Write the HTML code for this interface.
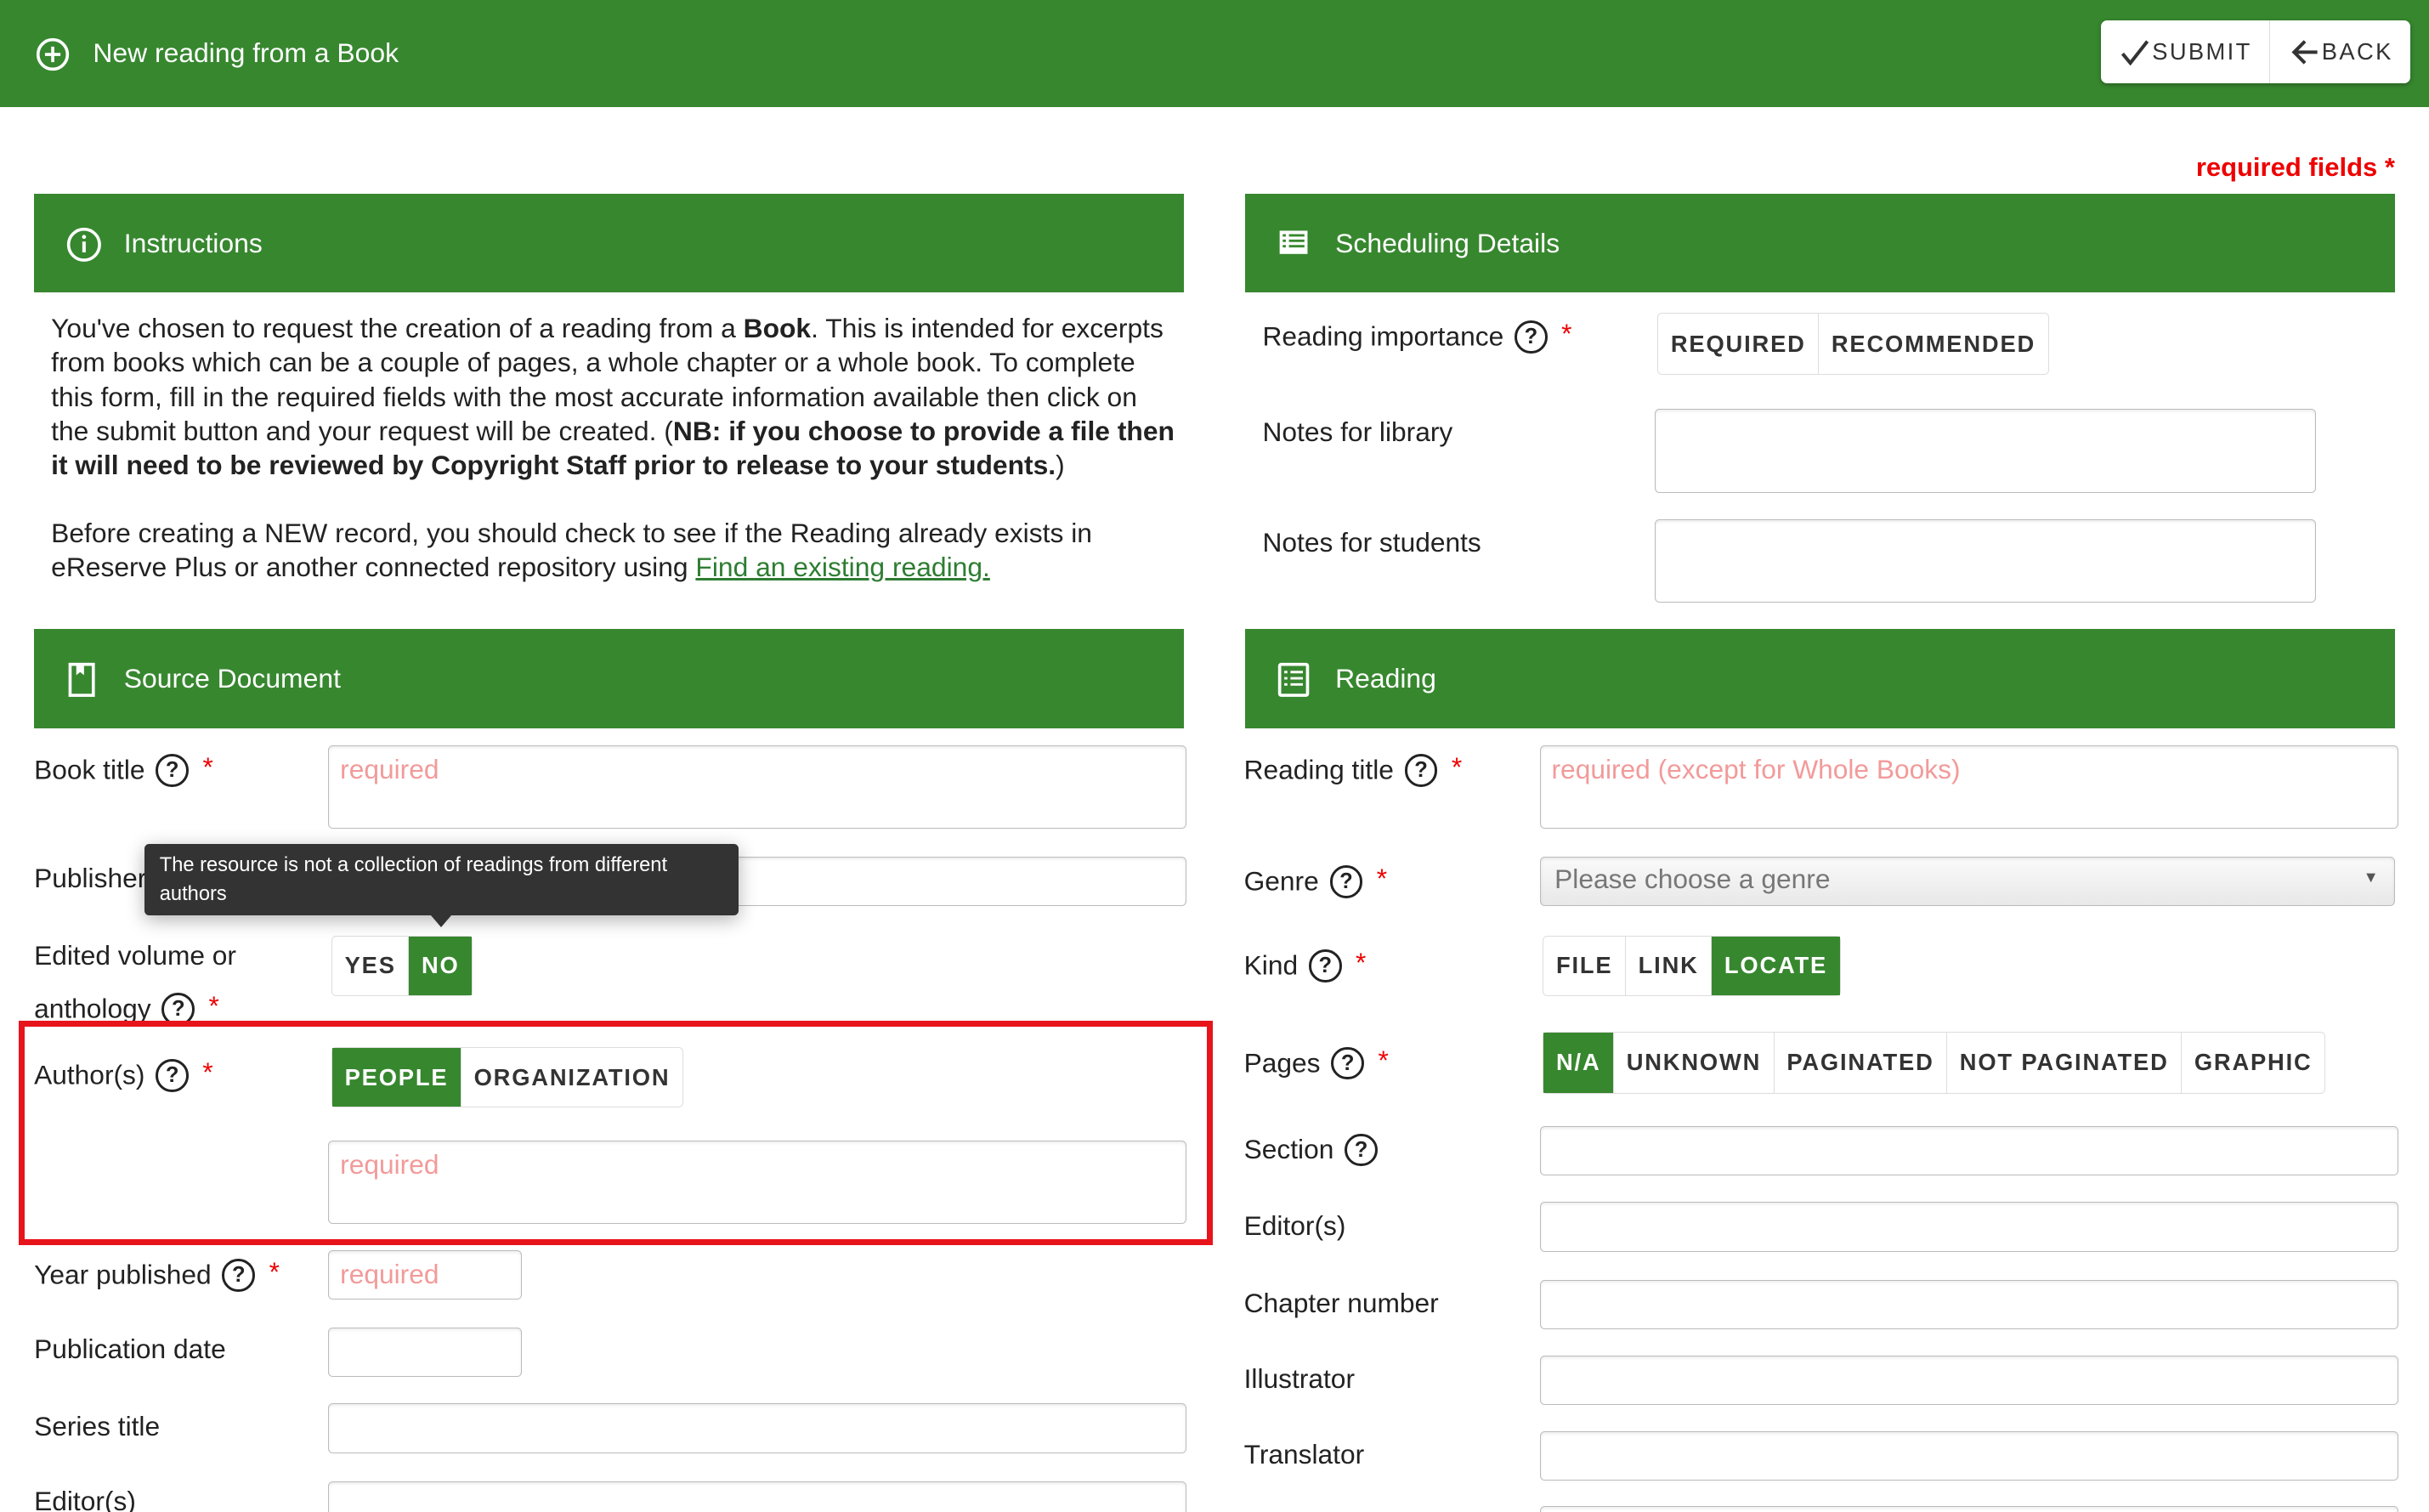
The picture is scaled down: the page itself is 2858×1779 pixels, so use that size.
<!DOCTYPE html>
<html><head><meta charset="utf-8"><style>
html,body{margin:0;padding:0;background:#fff;overflow:hidden}
body{width:2858px;height:1779px}
#w{zoom:1.8227;width:1568px;height:976px;position:relative;font-family:"Liberation Sans",Arial,sans-serif;color:#222;font-size:17px}
.a{position:absolute}
.g{background:#37872f;color:#fff}
.hd{position:absolute;height:64px;width:742px;background:#37872f;color:#fff;font-size:17.5px}
.hd span{position:absolute;left:58px;top:22px}
.hd svg{position:absolute;left:20px;top:21px}
.lb{position:absolute;font-size:17.4px;color:#222;white-space:nowrap;line-height:20px;margin-top:-2px}
.q{display:inline-block;width:18px;height:18px;border:2px solid #222;border-radius:50%;font-size:14px;font-weight:bold;text-align:center;line-height:18px;vertical-align:middle;position:relative;top:-1px;margin-left:7px}
.st{color:#e00;margin-left:9px;vertical-align:2px}
.in{position:absolute;border:1px solid #bbb;border-radius:3px;background:#fff;box-shadow:inset 0 1px 2px rgba(0,0,0,.08);box-sizing:border-box;color:#f29a9a;font-size:17.4px;padding:5px 7px}
.tg{position:absolute;display:flex;border:1px solid #ddd;border-radius:3px;box-sizing:border-box;background:#fff}
.tg div{padding:0 8px;font-size:15px;letter-spacing:1px;font-weight:bold;color:#333;border-right:1px solid #ddd;display:flex;align-items:center}
.tg div:last-child{border-right:none}
.tg .on{background:#37872f;color:#fff}
p{margin:0}
</style></head><body><div id="w">
<div class="a g" style="left:0;top:0;width:1568px;height:69px"></div>
<svg class="a" style="left:23px;top:24px" width="22" height="22" viewBox="0 0 22 22"><circle cx="11" cy="11" r="9.5" fill="none" stroke="#fff" stroke-width="2"/><path d="M11 6v10M6 11h10" stroke="#fff" stroke-width="2"/></svg>
<div class="a" style="left:60px;top:24px;color:#fff;font-size:17.5px">New reading from a Book</div>
<div class="a" style="left:1356px;top:13px;width:200px;height:41px;background:#fff;border-radius:4px;box-shadow:0 1px 3px rgba(0,0,0,.3);display:flex;font-size:15px;letter-spacing:1.3px;color:#333">
<div style="width:109px;border-right:1px solid #ddd;display:flex;align-items:center;justify-content:center"><svg width="22" height="18" viewBox="0 0 20 18"><path d="M2 10l5 6L18 2" fill="none" stroke="#333" stroke-width="2.2"/></svg>SUBMIT</div>
<div style="flex:1;display:flex;align-items:center;justify-content:center"><svg width="22" height="18" viewBox="0 0 20 18"><path d="M18 9H4M10 2L3 9l7 7" fill="none" stroke="#333" stroke-width="2.2"/></svg>BACK</div></div>
<div class="a" style="right:22px;top:98px;color:#e00;font-weight:bold;font-size:17px">required fields *</div>

<div class="hd" style="left:22px;top:125px"><svg width="24" height="24" viewBox="0 0 24 24"><circle cx="12" cy="12" r="10" fill="none" stroke="#fff" stroke-width="2"/><path d="M12 10v7" stroke="#fff" stroke-width="2.2"/><circle cx="12" cy="7" r="1.3" fill="#fff"/></svg><span>Instructions</span></div>
<div class="hd" style="left:804px;top:125px"><svg width="22" height="22" viewBox="0 0 22 22"><rect x="2" y="3" width="18" height="15" fill="#fff"/><path d="M4 6h2M8 6h10M4 9.5h2M8 9.5h10M4 13h2M8 13h10" stroke="#37872f" stroke-width="1.6"/></svg><span>Scheduling Details</span></div>
<div class="a" style="left:33px;top:201px;width:726px;line-height:22px;font-size:17.45px">
<p>You've chosen to request the creation of a reading from a <b>Book</b>. This is intended for excerpts from books which can be a couple of pages, a whole chapter or a whole book. To complete this form, fill in the required fields with the most accurate information available then click on the submit button and your request will be created. (<b>NB: if you choose to provide a file then it will need to be reviewed by Copyright Staff prior to release to your students.</b>)</p>
<p style="margin-top:22px">Before creating a NEW record, you should check to see if the Reading already exists in eReserve Plus or another connected repository using <span style="color:#2e7d32;text-decoration:underline">Find an existing reading.</span></p></div>

<div class="lb" style="left:815px;top:207px">Reading importance<span class="q">?</span><span class="st">*</span></div>
<div class="tg" style="left:1070px;top:202px;height:40px"><div>REQUIRED</div><div>RECOMMENDED</div></div>
<div class="lb" style="left:815px;top:271px">Notes for library</div>
<div class="in" style="left:1068px;top:264px;width:427px;height:54px"></div>
<div class="lb" style="left:815px;top:342px">Notes for students</div>
<div class="in" style="left:1068px;top:335px;width:427px;height:54px"></div>

<div class="hd" style="left:22px;top:406px"><svg width="22" height="24" viewBox="0 0 22 24"><rect x="3" y="2" width="15" height="20" fill="none" stroke="#fff" stroke-width="2"/><path d="M7 2v7l2.5-2 2.5 2V2" fill="#fff"/></svg><span>Source Document</span></div>
<div class="hd" style="left:804px;top:406px"><svg width="22" height="24" viewBox="0 0 22 24"><rect x="2" y="2" width="18" height="20" rx="1" fill="none" stroke="#fff" stroke-width="2"/><path d="M5 7h2M9 7h8M5 11h2M9 11h8M5 15h2M9 15h8" stroke="#fff" stroke-width="1.6"/></svg><span>Reading</span></div>

<div class="lb" style="left:22px;top:487px">Book title<span class="q">?</span><span class="st">*</span></div>
<div class="in" style="left:212px;top:481px;width:554px;height:54px">required</div>
<div class="lb" style="left:22px;top:559px">Publisher</div>
<div class="in" style="left:212px;top:553px;width:554px;height:32px"></div>
<div class="lb" style="left:22px;top:603px;line-height:32px">Edited volume or<br>anthology<span class="q">?</span><span class="st">*</span></div>
<div class="tg" style="left:214px;top:604px;height:39px"><div>YES</div><div class="on">NO</div></div>
<div class="a" style="left:93px;top:545px;width:384px;height:46px;background:#333;border-radius:3px;color:#fff;font-size:13px;line-height:19px;padding:4px 10px;box-sizing:border-box;box-shadow:0 3px 12px rgba(0,0,0,.3)">The resource is not a collection of readings from different authors</div>
<div class="a" style="left:278px;top:591px;width:0;height:0;border-left:7px solid transparent;border-right:7px solid transparent;border-top:8px solid #333"></div>

<div class="a" style="left:12px;top:659px;width:771px;height:145px;border:4px solid #e8141b;box-sizing:border-box"></div>
<div class="lb" style="left:22px;top:684px">Author(s)<span class="q">?</span><span class="st">*</span></div>
<div class="tg" style="left:214px;top:676px;height:39px"><div class="on">PEOPLE</div><div>ORGANIZATION</div></div>
<div class="in" style="left:212px;top:736px;width:554px;height:54px">required</div>
<div class="lb" style="left:22px;top:813px">Year published<span class="q">?</span><span class="st">*</span></div>
<div class="in" style="left:212px;top:807px;width:125px;height:32px;padding-top:5px">required</div>
<div class="lb" style="left:22px;top:863px">Publication date</div>
<div class="in" style="left:212px;top:857px;width:125px;height:32px"></div>
<div class="lb" style="left:22px;top:913px">Series title</div>
<div class="in" style="left:212px;top:906px;width:554px;height:32px"></div>
<div class="lb" style="left:22px;top:961px">Editor(s)</div>
<div class="in" style="left:212px;top:956px;width:554px;height:32px"></div>

<div class="lb" style="left:803px;top:487px">Reading title<span class="q">?</span><span class="st">*</span></div>
<div class="in" style="left:994px;top:481px;width:554px;height:54px">required (except for Whole Books)</div>
<div class="lb" style="left:803px;top:559px">Genre<span class="q">?</span><span class="st">*</span></div>
<div class="in" style="left:994px;top:553px;width:552px;height:32px;background:linear-gradient(#fafafa,#e8e8e8);color:#777;padding:4px 9px">Please choose a genre<span style="position:absolute;right:10px;top:7px;font-size:10px;color:#555">▼</span></div>
<div class="lb" style="left:803px;top:613px">Kind<span class="q">?</span><span class="st">*</span></div>
<div class="tg" style="left:996px;top:604px;height:39px"><div>FILE</div><div>LINK</div><div class="on">LOCATE</div></div>
<div class="lb" style="left:803px;top:676px">Pages<span class="q">?</span><span class="st">*</span></div>
<div class="tg" style="left:996px;top:666px;height:40px"><div class="on">N/A</div><div>UNKNOWN</div><div>PAGINATED</div><div>NOT PAGINATED</div><div>GRAPHIC</div></div>
<div class="lb" style="left:803px;top:734px">Section<span class="q">?</span></div>
<div class="in" style="left:994px;top:727px;width:554px;height:32px"></div>
<div class="lb" style="left:803px;top:783px">Editor(s)</div>
<div class="in" style="left:994px;top:776px;width:554px;height:32px"></div>
<div class="lb" style="left:803px;top:833px">Chapter number</div>
<div class="in" style="left:994px;top:826px;width:554px;height:32px"></div>
<div class="lb" style="left:803px;top:882px">Illustrator</div>
<div class="in" style="left:994px;top:875px;width:554px;height:32px"></div>
<div class="lb" style="left:803px;top:931px">Translator</div>
<div class="in" style="left:994px;top:924px;width:554px;height:32px"></div>
<div class="in" style="left:994px;top:972px;width:554px;height:32px"></div>
</div></body></html>
